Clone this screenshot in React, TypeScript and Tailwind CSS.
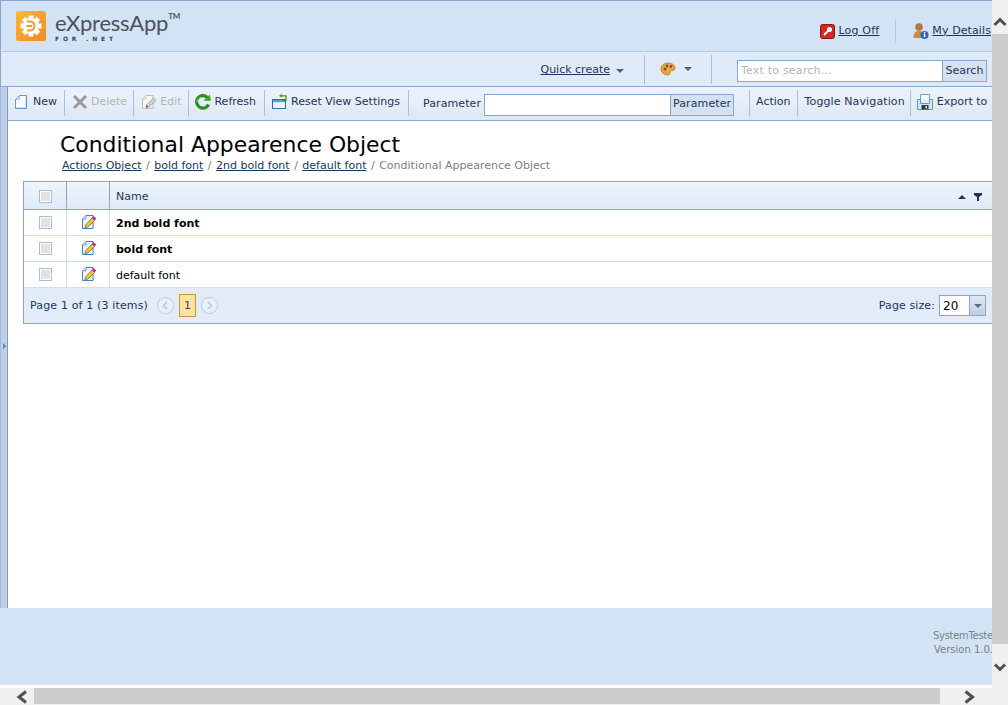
import React from "react";

const sep = "w-px shrink-0 self-stretch bg-[#a9bfdc]";

function NewIcon() {
  return (
    <svg width="16" height="16" viewBox="0 0 16 16" className="shrink-0">
      <path d="M2.5 5.5 L6.5 1.5 H13.5 V14.5 H2.5 Z" fill="#f7fbff" stroke="#5f95cf" />
      <path d="M3 5.5 H6.5 V2" fill="#dbe9f7" stroke="#a9c7e6" />
      <path d="M3.5 13.5 H12.5 V3" fill="none" stroke="#cfe0f2" />
    </svg>
  );
}
function DeleteIcon() {
  return (
    <svg width="16" height="16" viewBox="0 0 16 16" className="shrink-0">
      <path d="M2 2 L14 14 M14 2 L2 14" stroke="#999" strokeWidth="3" />
    </svg>
  );
}
function EditGray() {
  return (
    <svg width="16" height="16" viewBox="0 0 16 16" className="shrink-0">
      <path d="M1.5 5 L5 1.5 H12 V14.5 H1.5 Z" fill="#f6f6f6" stroke="#bdbdbd" />
      <path d="M1.5 5 H5 V1.5" fill="#e4e4e4" stroke="#cfcfcf" />
      <path d="M5.5 11 L12.5 4 L15 6.5 L8 13 L5 13.5 Z" fill="#d0d0d0" stroke="#8c8c8c" strokeWidth="0.7" />
      <path d="M5 13.5 L5.5 11 L7.5 12.8 Z" fill="#555" />
    </svg>
  );
}
function RefreshIcon() {
  return (
    <svg width="17" height="16" viewBox="0 0 17 16" className="shrink-0">
      <path d="M13.5 3.6 A6.3 6.3 0 1 0 14.6 10.5" fill="none" stroke="#2e8f20" strokeWidth="3.2" />
      <path d="M8.5 3.5 A5 5 0 0 0 3 8" fill="none" stroke="#9ad68a" strokeWidth="1" />
      <path d="M9.5 6.8 H17 L15.8 0.5 Z" fill="#3aa828" />
    </svg>
  );
}
function ResetIcon() {
  return (
    <svg width="16" height="16" viewBox="0 0 16 16" className="shrink-0">
      <rect x="0.5" y="5.5" width="13" height="9" fill="#eef5fd" stroke="#2f6db5" />
      <rect x="1" y="6" width="12" height="2.2" fill="#5b9be0" />
      <path d="M8 1.8 H14 V6.5 H10.5" fill="none" stroke="#3c9a2c" strokeWidth="1.3" />
      <path d="M10 0 L7 1.8 L10 3.6 Z" fill="#3c9a2c" />
    </svg>
  );
}
function ExportIcon() {
  return (
    <svg width="16" height="16" viewBox="0 0 16 16" className="shrink-0">
      <path d="M3.5 6 V0.5 H12.5 V6" fill="#f5f9fd" stroke="#6f9fd2" />
      <path d="M0.5 5.5 H3.5 V9.5 H12.5 V5.5 H15.5 V15.5 H0.5 Z" fill="#d5e5f5" stroke="#5f95cf" />
      <rect x="4.5" y="11" width="7" height="4.5" fill="#2f3a48" />
      <rect x="8.5" y="12" width="1.5" height="2.5" fill="#dfe8f2" />
    </svg>
  );
}
function RowEdit() {
  return (
    <svg width="16" height="16" viewBox="0 0 16 16" className="ml-[2px] mb-[1px] shrink-0">
      <path d="M1.5 5 L5 1.5 H12 V14.5 H1.5 Z" fill="#eef6ff" stroke="#3f7fc4" />
      <path d="M1.5 5 H5 V1.5" fill="#bcd7f3" stroke="#7aa8db" />
      <path d="M4.5 11 L11 4 L13.5 6.5 L7 13 L3.8 13.8 Z" fill="#f0c53b" stroke="#6f5e18" strokeWidth="0.7" />
      <path d="M11 4 L12.6 2 L15.3 4.6 L13.5 6.5 Z" fill="#b3309f" />
    </svg>
  );
}
function Check() {
  return (
    <span className="flex size-[13px] items-center justify-center border border-[#a9bdd6] bg-white">
      <span className="size-[9px] bg-[#e2e2e2]" />
    </span>
  );
}
function Logo() {
  const teeth = [0, 45, 90, 135, 180, 225, 270, 315];
  return (
    <svg width="30" height="30" viewBox="0 0 30 30" className="shrink-0">
      <defs>
        <linearGradient id="lg" x1="0" y1="0" x2="1" y2="1">
          <stop offset="0" stopColor="#fdb73a" />
          <stop offset="1" stopColor="#f08a24" />
        </linearGradient>
      </defs>
      <rect width="30" height="30" rx="2.5" fill="url(#lg)" />
      {teeth.map((a) => (
        <rect key={a} x="12.5" y="4.5" width="5" height="5" fill="#fff" transform={`rotate(${a} 15 15)`} />
      ))}
      <circle cx="15" cy="15" r="8" fill="#fff" />
      <path d="M11 10.5 H14 A4.5 4.5 0 0 1 14 19.5 H11" fill="none" stroke="#f59a2a" strokeWidth="2" />
      <path d="M10.5 15 H16" stroke="#f59a2a" strokeWidth="2" />
    </svg>
  );
}
function Tool({ icon, label, muted, extra = "gap-[4px] pl-[6px] pr-[6px]" }: { icon?: React.ReactNode; label: string; muted?: boolean; extra?: string }) {
  return (
    <div className={`flex shrink-0 items-center pb-[2px] ${muted ? "text-[#b3b6ba]" : "text-[#1d3557]"} ${extra}`}>
      {icon}
      <span className="whitespace-nowrap">{label}</span>
    </div>
  );
}
function Row({ label, bold }: { label: string; bold?: boolean }) {
  return (
    <div className="flex h-[26px] border-b border-[#cfdff0]">
      <div className="flex w-[43px] items-center justify-center border-r border-[#cfdff0]"><Check /></div>
      <div className="flex w-[43px] items-center justify-center border-r border-[#cfdff0]"><RowEdit /></div>
      <div className={`flex items-center pl-[6px] pt-[4px] text-black ${bold ? "font-bold" : ""}`}>{label}</div>
    </div>
  );
}
function Circle({ d }: { d: string }) {
  return (
    <svg width="17" height="17" viewBox="0 0 17 17" className="shrink-0">
      <circle cx="8.5" cy="8.5" r="8" fill="#e8f0f9" stroke="#bfcbd9" />
      <path d={d} fill="none" stroke="#bcc8d6" strokeWidth="1.6" />
    </svg>
  );
}
function Crumb({ children }: { children: React.ReactNode }) {
  return <span className="text-[#1d3557] underline">{children}</span>;
}
const Slash = () => <span className="mx-[1px]"> / </span>;

export default function App() {
  return (
    <div className="flex h-[705px] w-[1008px] overflow-hidden bg-[#f0f0f0] font-['DejaVu_Sans',sans-serif] text-[11px]">
      <div className="flex h-[705px] w-[992px] shrink-0 flex-col">
        <div className="flex h-[685px] w-[992px] shrink-0 flex-col overflow-hidden bg-white">
          {/* Header */}
          <div className="flex h-[52px] shrink-0 items-center justify-between border-l border-t border-b border-l-[#8ba6cc] border-t-[#8ba6cc] border-b-[#b5c9e2] bg-[#d2e3f5] pl-[15px] pr-[1px]">
            <div className="flex items-center gap-[9px]">
              <Logo />
              <div className="flex flex-col">
                <div className="flex items-start font-['Lato',sans-serif] text-[22px] leading-[24px] tracking-[-0.2px] text-[#4d4f5c]">eXpressApp<span className="mt-[1px] text-[8px] font-bold leading-[8px]">TM</span></div>
                <div className="text-[6px] font-bold leading-[7px] tracking-[3.8px] text-[#3d3f4a]">FOR .NET</div>
              </div>
            </div>
            <div className="flex items-center pt-[10px]">
              <svg width="15" height="15" viewBox="0 0 15 15" className="mr-[3px] shrink-0">
                <rect x="0.5" y="0.5" width="14" height="14" rx="2" fill="#cf2a20" stroke="#8f1610" />
                <circle cx="9.5" cy="5.5" r="2.5" fill="#fff" />
                <path d="M8 7 L4 11" stroke="#fff" strokeWidth="2" />
              </svg>
              <span className="tracking-[0.2px] text-[#1d3557] underline">Log Off</span>
              <span className="ml-[16px] mr-[17px] h-[24px] w-px bg-[#b5c9e2]" />
              <svg width="16" height="18" viewBox="0 0 16 18" className="mr-[3px] shrink-0">
                <circle cx="6" cy="5" r="3.8" fill="#b5763a" />
                <path d="M0.5 16 C0.5 10 3 9 6 9 C9 9 11 10 11 16 Z" fill="#c98a45" />
                <circle cx="11.5" cy="13" r="4" fill="#2a69b5" />
                <rect x="10.8" y="11.8" width="1.5" height="3.4" fill="#fff" />
                <rect x="10.8" y="10" width="1.5" height="1.2" fill="#fff" />
              </svg>
              <span className="whitespace-nowrap tracking-[0.1px] text-[#1d3557] underline">My Details</span>
            </div>
          </div>
          {/* Second bar */}
          <div className="flex h-[35px] shrink-0 items-center justify-end border-l border-b border-l-[#8ba6cc] border-b-[#8ba6cc] bg-[#dfeaf8] pr-[5px] pt-[3px]">
            <span className="text-[#1d3557] underline">Quick create</span>
            <span className="ml-[6px] h-0 w-0 border-x-[4px] border-t-[4px] border-x-transparent border-t-[#555f6c]" />
            <span className="-mt-[3px] ml-[20px] mr-[15px] h-[29px] w-px bg-[#a9bfdc]" />
            <svg width="16" height="14" viewBox="0 0 16 14" className="-mt-[3px] shrink-0">
              <path d="M8 1 C13 1 15.5 4 15 7 C14.5 9 11.5 8 10.5 9 C9.5 10 11 12.5 8 13 C4 13 1 10 1 7 C1 3.5 4 1 8 1 Z" fill="#e8a93c" stroke="#9a6a22" strokeWidth="0.7" />
              <circle cx="5" cy="7" r="1.5" fill="#cf2a20" />
              <circle cx="7" cy="4" r="1.4" fill="#2a69b5" />
              <circle cx="11" cy="4.5" r="1.4" fill="#cf2a20" />
            </svg>
            <span className="-mt-[3px] ml-[8px] h-0 w-0 border-x-[4px] border-t-[4px] border-x-transparent border-t-[#555f6c]" />
            <span className="-mt-[3px] ml-[19px] mr-[25px] h-[29px] w-px bg-[#a9bfdc]" />
            <div className="flex h-[22px] items-stretch border border-[#8ba6cc]">
              <div className="flex w-[204px] items-center bg-white pl-[3px] pt-[1px] tracking-[0.2px] text-[#b3b6ba]">Text to search...</div>
              <div className="flex w-[44px] items-center justify-center border-l border-[#8ba6cc] bg-[#d4e1f0] pt-[1px] text-[#1d3557]">Search</div>
            </div>
          </div>
          {/* Toolbar */}
          <div className="flex shrink-0">
            <div className="w-[8px] shrink-0 border-x border-l-[#a3b9d8] border-r-[#7e9ac6] bg-[#bcd0ea]" />
            <div className="flex h-[34px] min-w-0 flex-1 items-center overflow-hidden border-b border-[#8ba6cc] bg-gradient-to-b from-[#edf3fc] to-[#dde8f5] pb-[4px] pt-[3px]">
              <Tool icon={<NewIcon />} label="New" extra="gap-[4px] pl-[5px] pr-[7px]" />
              <span className={sep} />
              <Tool icon={<DeleteIcon />} label="Delete" muted extra="gap-[3px] pl-[7px] pr-[6px]" />
              <span className={sep} />
              <Tool icon={<EditGray />} label="Edit" muted extra="gap-[3px] pl-[7px] pr-[7px]" />
              <span className={sep} />
              <Tool icon={<RefreshIcon />} label="Refresh" extra="gap-[3px] pl-[5px] pr-[8px]" />
              <span className={sep} />
              <Tool icon={<ResetIcon />} label="Reset View Settings" extra="gap-[3px] pl-[7px] pr-[8px]" />
              <span className={sep} />
              <div className="ml-[14px] flex shrink-0 items-center pt-[3px]">
                <span className="tracking-[0.1px] text-[#1d3557]">Parameter</span>
                <div className="ml-[3px] flex h-[22px] items-stretch border border-[#8ba6cc]">
                  <div className="w-[185px] bg-white" />
                  <div className="flex w-[63px] items-center justify-center border-l border-[#8ba6cc] bg-[#d4e1f0] tracking-[0.1px] text-[#1d3557]">Parameter</div>
                </div>
              </div>
              <span className={`${sep} ml-[15px]`} />
              <Tool label="Action" extra="pl-[6px] pr-[6px]" />
              <span className={sep} />
              <Tool label="Toggle Navigation" extra="pl-[7px] pr-[5px] tracking-[0.12px]" />
              <span className={sep} />
              <Tool icon={<ExportIcon />} label="Export to" extra="gap-[4px] pl-[6px] pr-[6px]" />
            </div>
          </div>
          {/* Main */}
          <div className="flex min-h-0 flex-1">
            <div className="w-[8px] shrink-0 border-x border-l-[#a3b9d8] border-r-[#7e9ac6] bg-[#bcd0ea] pl-[2px] pt-[222px]">
              <svg width="3" height="6" viewBox="0 0 3 6" className="block"><path d="M0 0 L3 3 L0 6 Z" fill="#5a7db0" /></svg>
            </div>
            <div className="min-w-0 flex-1 overflow-hidden bg-white">
              <div className="pl-[52px] pt-[10px]">
                <div className="whitespace-nowrap text-[21.9px] leading-[28px] text-black">Conditional Appearence Object</div>
                <div className="ml-[2px] whitespace-nowrap leading-[14px] text-[#7b7f86]">
                  <Crumb>Actions Object</Crumb><Slash /><Crumb>bold font</Crumb><Slash /><Crumb>2nd bold font</Crumb><Slash /><Crumb>default font</Crumb><Slash />Conditional Appearence Object
                </div>
              </div>
              <div className="ml-[15px] mt-[8px] w-[969px] border-y border-l border-[#8ba6cc]">
                <div className="flex h-[28px] border-b border-[#8ba6cc] bg-gradient-to-b from-[#eef4fc] to-[#dfeaf7] text-[#1d3557]">
                  <div className="flex w-[43px] items-center justify-center border-r border-[#8ba6cc] pt-[1px]"><Check /></div>
                  <div className="w-[43px] border-r border-[#8ba6cc]" />
                  <div className="flex flex-1 items-center justify-between pl-[6px] pr-[10px] pt-[2px]">
                    <span className="pt-[1px]">Name</span>
                    <span className="flex items-center gap-[8px]">
                      <span className="h-0 w-0 border-x-[4px] border-b-[4px] border-x-transparent border-b-[#1d3557]" />
                      <svg width="8" height="8" viewBox="0 0 8 8"><path d="M0 0 H8 V2 L5 4 V8 H3 V4 L0 2 Z" fill="#1d3557" /></svg>
                    </span>
                  </div>
                </div>
                <Row label="2nd bold font" bold />
                <Row label="bold font" bold />
                <Row label="default font" />
                <div className="flex h-[35px] items-center justify-between bg-[#e2ecf8] pl-[6px] pr-[6px] text-[#1d3557]">
                  <div className="flex items-center">
                    <span className="pt-[2px] tracking-[0.15px]">Page 1 of 1 (3 items)</span>
                    <span className="ml-[9px]"><Circle d="M10 5 L6.5 8.5 L10 12" /></span>
                    <span className="ml-[5px] flex h-[23px] w-[17px] items-center justify-center border border-[#c9963c] bg-[#fbe29e] pt-[2px] text-[#444]">1</span>
                    <span className="ml-[5px]"><Circle d="M7 5 L10.5 8.5 L7 12" /></span>
                  </div>
                  <div className="flex items-center">
                    <span className="pt-[2px] tracking-[0.1px]">Page size:</span>
                    <div className="ml-[4px] flex h-[21px] border border-[#8ba6cc]">
                      <div className="flex w-[29px] items-center bg-white pl-[3px] text-[12px] text-black">20</div>
                      <div className="flex w-[16px] items-center justify-center border-l border-[#8ba6cc] bg-gradient-to-b from-[#dfe9f5] to-[#bccde3]">
                        <span className="h-0 w-0 border-x-[4px] border-t-[4px] border-x-transparent border-t-[#5d6c80]" />
                      </div>
                    </div>
                  </div>
                </div>
              </div>
            </div>
          </div>
          {/* Footer */}
          <div className="flex h-[77px] shrink-0 justify-end overflow-hidden bg-[#d2e3f5] pt-[21px] text-[10px] tracking-[-0.3px] text-[#7b8088]">
            <div className="w-[59px] shrink-0 overflow-hidden whitespace-nowrap leading-[14px]">
              <div>SystemTester</div>
              <div className="pl-[1px] tracking-[0px]">Version 1.0.0</div>
            </div>
          </div>
        </div>
        <div className="h-[3px] shrink-0 bg-white" />
        {/* H scrollbar */}
        <div className="flex h-[17px] shrink-0 items-stretch">
          <svg width="34" height="17" viewBox="0 0 34 17" className="shrink-0"><path d="M26 3.5 L19 9 L26 14.5" fill="none" stroke="#505050" strokeWidth="3" /></svg>
          <div className="h-[16px] w-[906px] bg-[#cdcdcd]" />
          <svg width="52" height="17" viewBox="0 0 52 17" className="shrink-0"><path d="M25.5 3.5 L32.5 9 L25.5 14.5" fill="none" stroke="#505050" strokeWidth="3" /></svg>
        </div>
      </div>
      {/* V scrollbar */}
      <div className="flex h-[705px] w-[16px] shrink-0 flex-col">
        <svg width="16" height="34" viewBox="0 0 16 34" className="shrink-0"><path d="M2.5 25 L8 19.5 L13.5 25" fill="none" stroke="#505050" strokeWidth="3" /></svg>
        <div className="w-full flex-1 bg-[#cdcdcd]" />
        <svg width="16" height="61" viewBox="0 0 16 61" className="shrink-0"><path d="M3 20.5 L8 25.5 L13 20.5" fill="none" stroke="#505050" strokeWidth="3" /></svg>
      </div>
    </div>
  );
}
